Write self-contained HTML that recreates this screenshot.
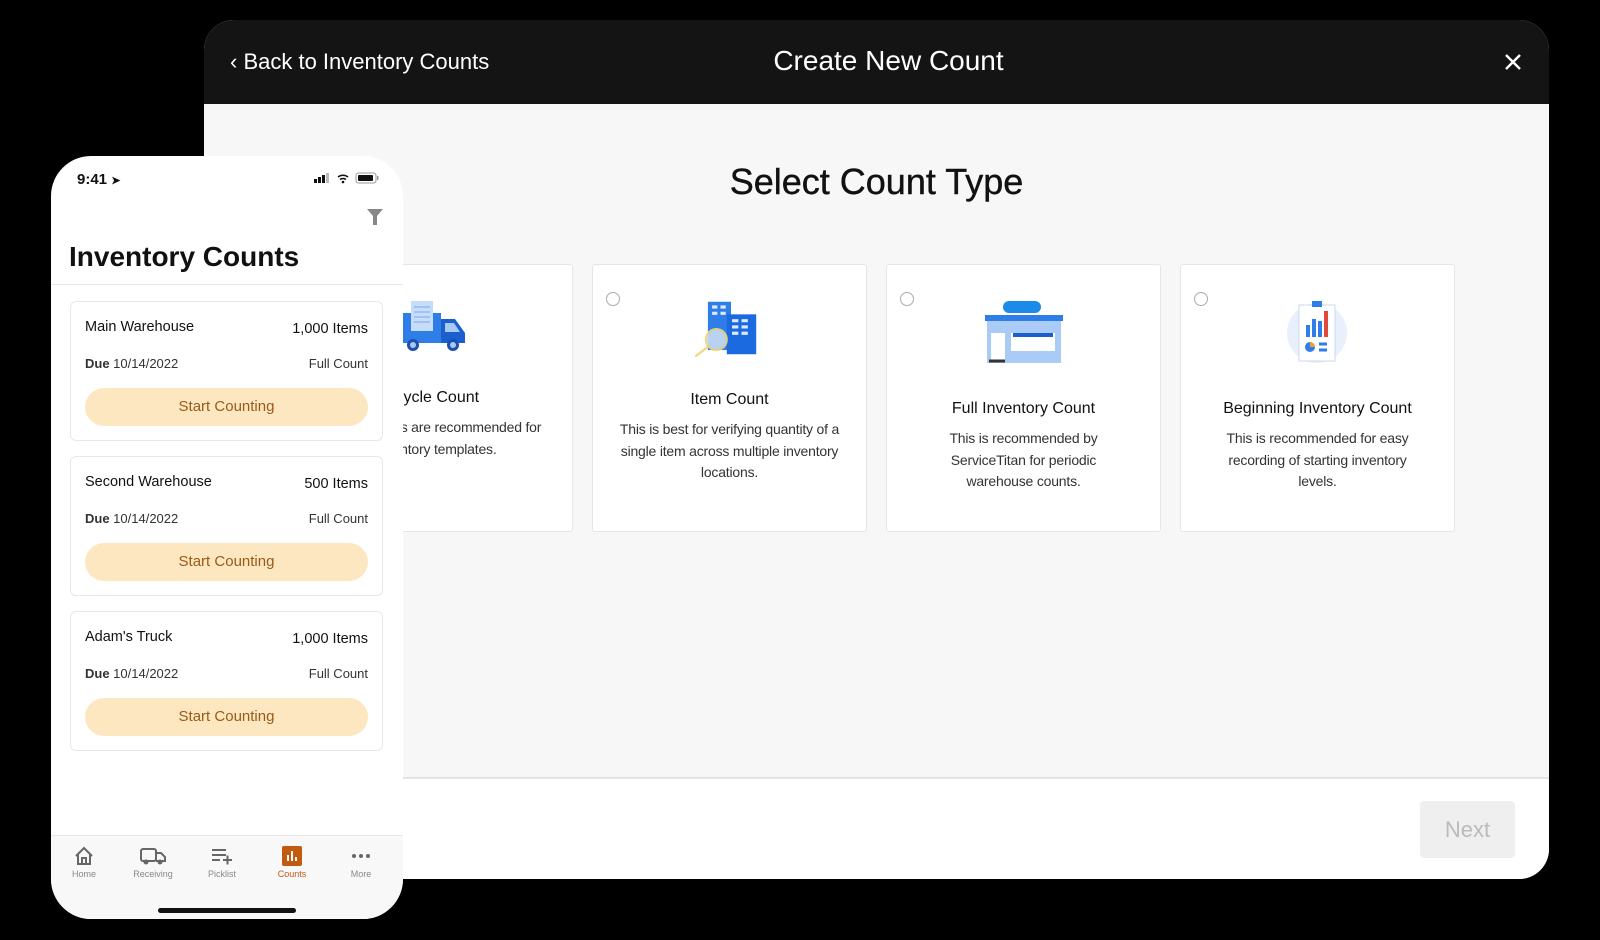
<!DOCTYPE html>
<html><head><meta charset="utf-8"><style>
*{box-sizing:border-box;margin:0;padding:0}
body{width:1600px;height:940px;background:#000;position:relative;overflow:hidden;font-family:"Liberation Sans",sans-serif;color:#111}
.abs{position:absolute}
.tab{left:204px;top:20px;width:1345px;height:859px;border-radius:30px;background:#f7f7f7;overflow:hidden}
.hdr{left:0;top:0;width:100%;height:84px;background:#141414;color:#fff}
.foot{left:0;top:757px;width:100%;height:102px;background:#fff;border-top:2px solid #e4e4e4}
.card{top:244px;width:275px;height:268px;background:#fff;border:1px solid #e6e6e6;border-radius:3px;text-align:center}
.card h3{position:absolute;left:0;right:0;font-size:16px;font-weight:normal;color:#111}
.card p{position:absolute;left:22px;right:22px;font-size:14px;line-height:21.5px;color:#333;letter-spacing:-0.2px}
.radio{position:absolute;left:13px;top:27px;width:14px;height:14px;border:1px solid #aaa;border-radius:50%}
.ph{left:51px;top:156px;width:352px;height:763px;background:#fff;border-radius:40px;overflow:hidden}
.pc{left:19px;width:313px;height:140px;border:1px solid #e8e8e8;border-radius:6px;background:#fff}
.pc .t{position:absolute;left:14px;top:17px;font-size:14.5px}
.pc .n{position:absolute;right:14px;top:19px;font-size:14.5px}
.pc .d{position:absolute;left:14px;top:54px;font-size:13px;color:#333}
.pc .f{position:absolute;right:14px;top:54px;font-size:13px;color:#333}
.pc .b{position:absolute;left:14px;right:14px;top:86px;height:38px;border-radius:19px;background:#fde7c1;color:#9a5a17;font-size:15px;text-align:center;line-height:38px}
.tb{top:679px;left:0;width:100%;height:84px;background:#f8f8f8;border-top:1px solid #e8e8e8}
.ti{position:absolute;top:0;width:60px;text-align:center;font-size:9px;color:#888}
.ti svg{display:block;margin:10px auto 3px}
</style></head><body>
<div class="abs tab">
 <div class="abs hdr">
  <div class="abs" style="left:26px;top:29px;font-size:22px">‹ Back to Inventory Counts</div>
  <div class="abs" style="left:0;right:0;top:25px;text-align:center;font-size:28px;padding-left:24px">Create New Count</div>
  <svg class="abs" style="left:1300px;top:33px" width="18" height="18" viewBox="0 0 18 18"><path d="M2 2L16 16M16 2L2 16" stroke="#fff" stroke-width="2.4"/></svg>
 </div>
 <div class="abs" style="left:0;right:0;top:141px;text-align:center;font-size:36px;-webkit-text-stroke:0.4px #111">Select Count Type</div>
 <div class="abs card" style="left:94px">
  <svg class="abs" style="left:98px;top:34px" width="74" height="56" viewBox="0 0 74 56"><rect x="4" y="14" width="40" height="30" fill="#2f7de6"/><path d="M44 20h14l10 14v10H44z" fill="#1b5fcf"/><path d="M48 24h9l6 9h-15z" fill="#a9c9f5"/><rect x="14" y="2" width="22" height="30" fill="#c6dcf8"/><path d="M17 8h16M17 13h16M17 18h16M17 23h16" stroke="#7aa8e8"/><circle cx="16" cy="46" r="6" fill="#1b4fb0"/><circle cx="16" cy="46" r="3" fill="#a9c9f5"/><circle cx="56" cy="46" r="6" fill="#1b4fb0"/><circle cx="56" cy="46" r="3" fill="#a9c9f5"/></svg>
  <h3 style="top:124px">Cycle Count</h3>
  <p style="top:152px">Cycle counts are recommended for Inventory templates.</p>
 </div>
 <div class="abs card" style="left:388px">
  <div class="radio"></div>
  <svg class="abs" style="left:96px;top:32px" width="84" height="62" viewBox="0 0 80 58"><rect x="18" y="4" width="22" height="46" fill="#2f7de6"/><rect x="36" y="16" width="28" height="38" fill="#1b6ae0"/><path d="M22 9h5M30 9h5M22 15h5M30 15h5M41 22h6M50 22h6M41 28h6M50 28h6M41 34h6M50 34h6" stroke="#dde9fb" stroke-width="3"/><circle cx="26" cy="40" r="10" fill="#c9dcf4" stroke="#f0d77a" stroke-width="2" opacity=".9"/><path d="M18 47L6 56" stroke="#f0d77a" stroke-width="2"/></svg>
  <h3 style="top:126px">Item Count</h3>
  <p style="top:154px;left:26px;right:26px">This is best for verifying quantity of a single item across multiple inventory locations.</p>
 </div>
 <div class="abs card" style="left:682px">
  <div class="radio"></div>
  <svg class="abs" style="left:96px;top:34px" width="82" height="66" viewBox="0 0 82 66"><rect x="20" y="2" width="38" height="12" rx="6" fill="#1b8ae8"/><rect x="2" y="16" width="78" height="6" fill="#2f7de6"/><rect x="4" y="22" width="74" height="42" fill="#a9cbf5"/><rect x="8" y="34" width="14" height="28" fill="#fff"/><rect x="28" y="34" width="44" height="18" fill="#fff"/><path d="M30 36h40" stroke="#1b5fcf" stroke-width="4"/><path d="M6 62h16" stroke="#333" stroke-width="3"/></svg>
  <h3 style="top:135px">Full Inventory Count</h3>
  <p style="top:163px;left:44px;right:44px">This is recommended by ServiceTitan for periodic warehouse counts.</p>
 </div>
 <div class="abs card" style="left:976px">
  <div class="radio"></div>
  <svg class="abs" style="left:102px;top:34px" width="70" height="66" viewBox="0 0 70 66"><circle cx="34" cy="34" r="30" fill="#e9f0fb"/><rect x="16" y="6" width="36" height="56" fill="#fff" stroke="#c9d9f0"/><rect x="29" y="2" width="10" height="6" fill="#2f7de6"/><rect x="23" y="26" width="4" height="12" fill="#2f7de6"/><rect x="29" y="20" width="4" height="18" fill="#2f7de6"/><rect x="35" y="22" width="4" height="16" fill="#2f7de6"/><rect x="41" y="12" width="4" height="26" fill="#e04a3a"/><circle cx="27" cy="48" r="5" fill="#2f7de6"/><path d="M27 48V43A5 5 0 0 1 32 48z" fill="#f0a030"/><path d="M36 45h8M36 51h8" stroke="#2f7de6" stroke-width="3"/></svg>
  <h3 style="top:135px">Beginning Inventory Count</h3>
  <p style="top:163px;left:36px;right:36px">This is recommended for easy recording of starting inventory levels.</p>
 </div>
 <div class="abs foot">
  <div class="abs" style="left:1216px;top:22px;width:95px;height:57px;background:#efefef;border-radius:4px;color:#bbb;font-size:22px;text-align:center;line-height:57px">Next</div>
 </div>
</div>

<div class="abs ph">
 <div class="abs" style="left:26px;top:15px;font-size:15px;font-weight:bold">9:41 <span style="font-size:11px">➤</span></div>
 <svg class="abs" style="left:263px;top:16px" width="65" height="12" viewBox="0 0 65 12"><rect x="0" y="7" width="3" height="4" fill="#111"/><rect x="4" y="5" width="3" height="6" fill="#111"/><rect x="8" y="3" width="3" height="8" fill="#111"/><rect x="12" y="1" width="3" height="10" fill="#bbb"/><path d="M24 5a8 8 0 0 1 10 0M26 7.5a5 5 0 0 1 6 0" stroke="#111" stroke-width="1.6" fill="none"/><circle cx="29" cy="10" r="1.3" fill="#111"/><rect x="42" y="1" width="20" height="10" rx="2.5" fill="none" stroke="#999"/><rect x="44" y="3" width="15" height="6" rx="1" fill="#111"/><rect x="63" y="4" width="1.5" height="4" fill="#999"/></svg>
 <svg class="abs" style="left:316px;top:53px" width="16" height="16" viewBox="0 0 16 16"><path d="M0 0h16l-6 7v9h-4V7z" fill="#888"/></svg>
 <div class="abs" style="left:18px;top:85px;font-size:28px;font-weight:bold">Inventory Counts</div>
 <div class="abs" style="left:0;top:128px;width:100%;height:1px;background:#e8e8e8"></div>
 <div class="abs pc" style="top:145px"><div class="t">Main Warehouse</div><div class="n">1,000 Items</div><div class="d"><b>Due</b> 10/14/2022</div><div class="f">Full Count</div><div class="b">Start Counting</div></div>
 <div class="abs pc" style="top:300px"><div class="t">Second Warehouse</div><div class="n">500 Items</div><div class="d"><b>Due</b> 10/14/2022</div><div class="f">Full Count</div><div class="b">Start Counting</div></div>
 <div class="abs pc" style="top:455px"><div class="t">Adam's Truck</div><div class="n">1,000 Items</div><div class="d"><b>Due</b> 10/14/2022</div><div class="f">Full Count</div><div class="b">Start Counting</div></div>
 <div class="abs tb">
  <div class="ti" style="left:3px"><svg width="20" height="20" viewBox="0 0 20 20"><path d="M2 10L10 2l8 8M4 8v10h12V8M8 18v-6h4v6" stroke="#666" stroke-width="2" fill="none"/></svg>Home</div>
  <div class="ti" style="left:72px"><svg width="26" height="20" viewBox="0 0 26 20"><rect x="1" y="3" width="15" height="12" rx="2" stroke="#666" stroke-width="2" fill="none"/><path d="M16 7h5l4 4v4h-9" stroke="#666" stroke-width="2" fill="none"/><circle cx="6" cy="16" r="2.5" fill="#666"/><circle cx="20" cy="16" r="2.5" fill="#666"/></svg>Receiving</div>
  <div class="ti" style="left:141px"><svg width="24" height="20" viewBox="0 0 24 20"><path d="M2 4h14M2 9h14M2 14h8M13 14h9M17.5 9.5v9" stroke="#666" stroke-width="2"/></svg>Picklist</div>
  <div class="ti" style="left:211px;color:#c25a10"><svg width="20" height="20" viewBox="0 0 20 20"><rect width="20" height="20" rx="2" fill="#c25a10"/><path d="M6 9v6M10 5v10M14 11v4" stroke="#fff" stroke-width="2"/></svg>Counts</div>
  <div class="ti" style="left:280px"><svg width="20" height="20" viewBox="0 0 20 20"><circle cx="3" cy="10" r="2" fill="#666"/><circle cx="10" cy="10" r="2" fill="#666"/><circle cx="17" cy="10" r="2" fill="#666"/></svg>More</div>
  <div class="abs" style="left:107px;top:72px;width:138px;height:5px;border-radius:3px;background:#111"></div>
 </div>
</div>
</body></html>
